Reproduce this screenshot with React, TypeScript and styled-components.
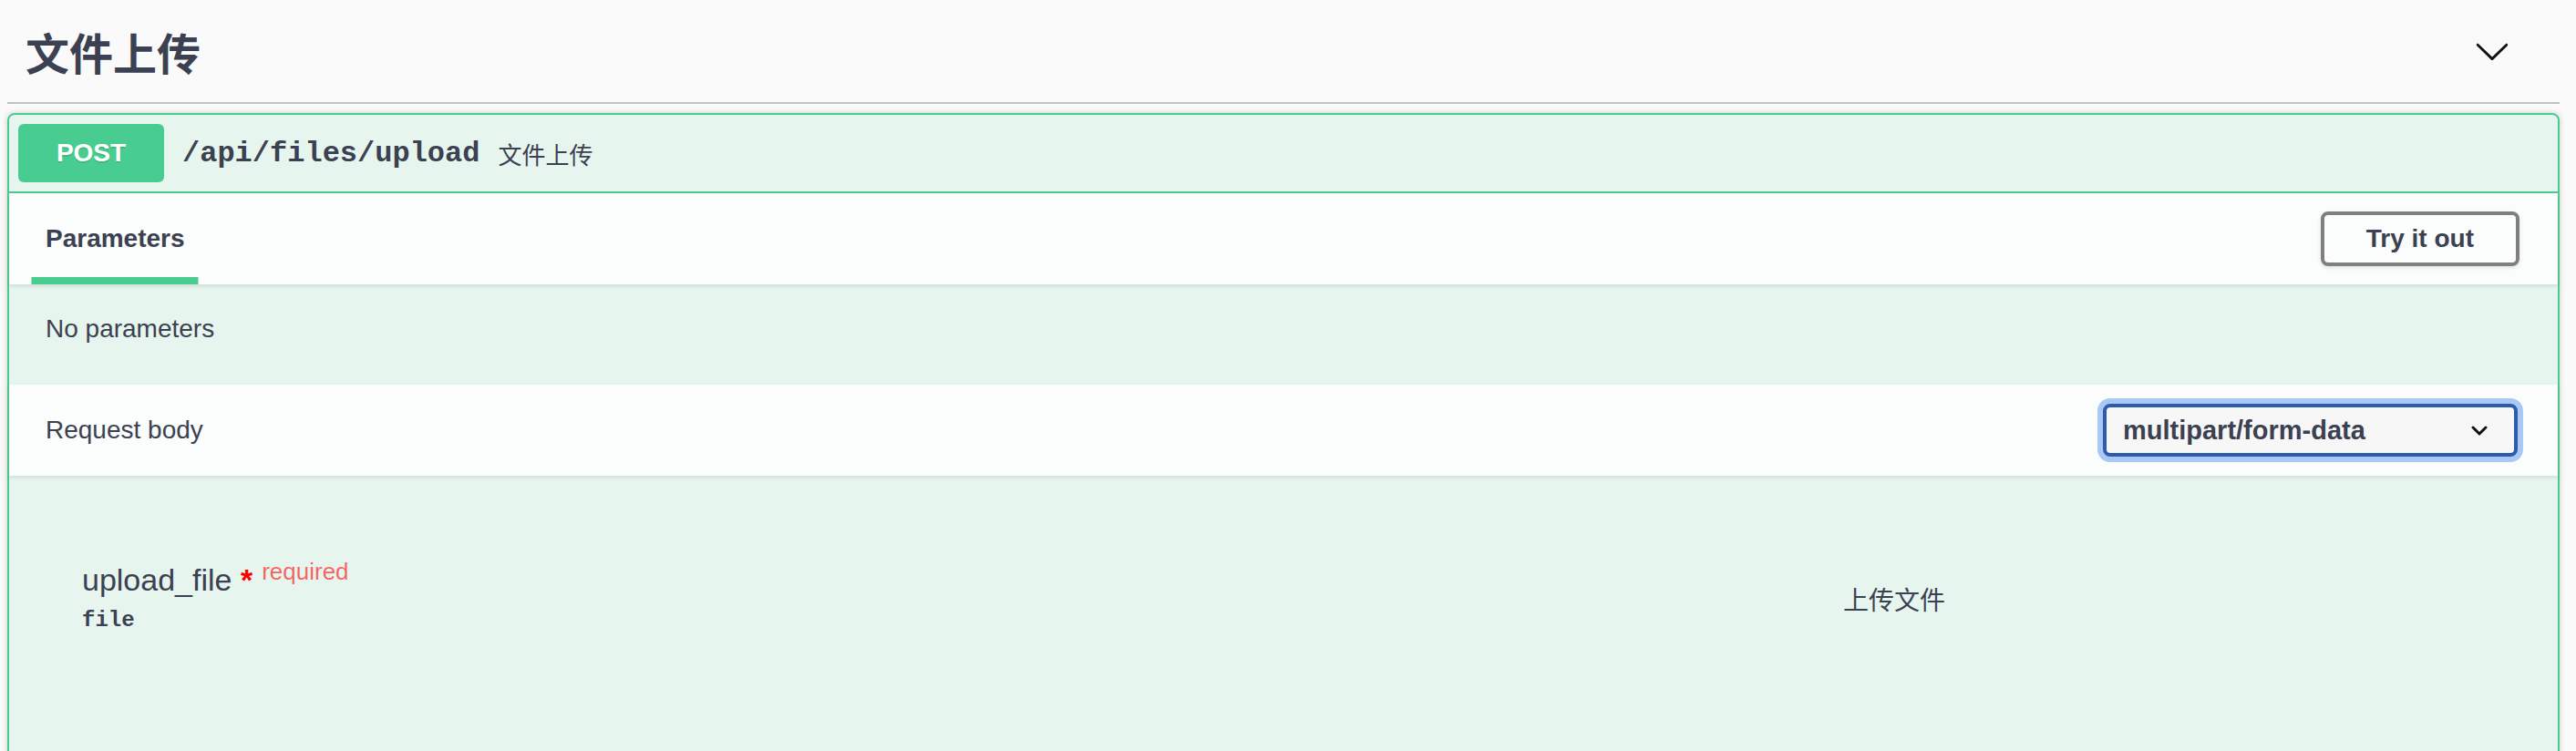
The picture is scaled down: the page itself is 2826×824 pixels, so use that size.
import styled, { createGlobalStyle } from "styled-components";

const GlobalStyle = createGlobalStyle`
  html, body {
    margin: 0;
    padding: 0;
    background: #fafafa;
    overflow: hidden;
  }
  body {
    font-family: "Liberation Sans", "Noto Sans CJK SC", sans-serif;
    color: #3b4151;
  }
`;

const Page = styled.div`
  height: 824px;
  padding: 0 18px 0 8px;
  box-sizing: border-box;
  overflow: hidden;
`;

const TagHeader = styled.div`
  display: flex;
  align-items: center;
  justify-content: space-between;
  padding: 20px 54px 20px 20px;
  margin-bottom: 10px;
  border-bottom: 2px solid rgba(59, 65, 81, 0.3);
`;

const TagTitle = styled.h3`
  margin: 0;
  font-family: "Noto Sans CJK SC", sans-serif;
  font-size: 48px;
  line-height: 72px;
  font-weight: 700;
  color: #3b4151;
`;

const ExpandButton = styled.button`
  display: flex;
  padding: 0;
  border: none;
  background: none;
  cursor: pointer;
`;

const Opblock = styled.div`
  border: 2px solid #49cc90;
  border-radius: 8px;
  background: rgba(73, 204, 144, 0.1);
  box-shadow: 0 0 6px rgba(0, 0, 0, 0.19);
`;

const Summary = styled.div`
  display: flex;
  align-items: center;
  padding: 10px;
  border-bottom: 2px solid #49cc90;
`;

const MethodBadge = styled.span`
  min-width: 160px;
  padding: 12px 0;
  line-height: 40px;
  font-size: 28px;
  font-weight: 700;
  text-align: center;
  color: #fff;
  background: #49cc90;
  border-radius: 6px;
  text-shadow: 0 2px 0 rgba(0, 0, 0, 0.1);
`;

const PathText = styled.span`
  padding: 0 20px;
  font-family: "Liberation Mono", monospace;
  font-size: 32px;
  font-weight: 700;
  color: #3b4151;
`;

const SummaryDesc = styled.span`
  font-size: 26px;
  color: #3b4151;
`;

const SectionHeader = styled.div`
  position: relative;
  display: flex;
  align-items: center;
  justify-content: space-between;
  min-height: 100px;
  padding: 0 40px;
  box-sizing: border-box;
  background: rgba(255, 255, 255, 0.8);
  box-shadow: 0 2px 4px rgba(0, 0, 0, 0.1);
`;

const TabsHeader = styled(SectionHeader)`
  align-items: stretch;
  height: 100px;
`;

const Tab = styled.div`
  position: relative;
  display: flex;
  align-items: center;

  &::after {
    content: "";
    position: absolute;
    left: 50%;
    bottom: 0;
    width: 120%;
    height: 8px;
    background: #49cc90;
    transform: translateX(-50%);
  }
`;

const SectionTitle = styled.h4<{ $bold?: boolean }>`
  margin: 0;
  font-size: 28px;
  line-height: 32px;
  font-weight: ${({ $bold }) => ($bold ? 700 : 400)};
  color: #3b4151;
`;

const TryButton = styled.button`
  align-self: center;
  padding: 10px 46px;
  font-family: "Liberation Sans", sans-serif;
  font-size: 28px;
  line-height: 32px;
  font-weight: 700;
  color: #3b4151;
  background: transparent;
  border: 4px solid #7f7f7f;
  border-radius: 8px;
  box-shadow: 0 2px 4px rgba(0, 0, 0, 0.1);
  margin-right: 2px;
`;

const EmptyNote = styled.div`
  padding: 33px 40px 45px;
  font-size: 28px;
  line-height: 32px;
`;

const SelectBox = styled.div`
  display: flex;
  align-items: center;
  justify-content: space-between;
  width: 455px;
  height: 58px;
  margin-right: 4px;
  padding: 0 29px 0 18px;
  box-sizing: border-box;
  font-size: 29px;
  font-weight: 700;
  color: #3b4151;
  background: #f7f7f8;
  border: 4px solid #2c5cab;
  border-radius: 8px;
  box-shadow: 0 0 0 6px rgba(104, 156, 238, 0.55);
`;

const ParamSection = styled.div`
  padding: 92px 40px 200px 80px;
`;

const ParamRow = styled.div`
  display: grid;
  grid-template-columns: 1932px 1fr;
`;

const NameLine = styled.div`
  font-size: 34px;
  line-height: 38px;
  color: #3b4151;
  white-space: nowrap;
`;

const Star = styled.span`
  color: #f00;
  font-weight: 700;
`;

const RequiredTag = styled.span`
  padding: 0 10px;
  font-size: 26px;
  line-height: 26px;
  vertical-align: 12px;
  color: rgba(255, 0, 0, 0.6);
`;

const TypeLine = styled.div`
  padding-top: 12px;
  font-family: "Liberation Mono", monospace;
  font-size: 24px;
  line-height: 27px;
  font-weight: 700;
  color: #3b4151;
`;

const ParamDesc = styled.div`
  align-self: center;
  padding-top: 6px;
  font-family: "Noto Sans CJK SC", sans-serif;
  font-size: 28px;
  color: #3b4151;
`;

const Chevron = () => (
  <svg width="40" height="40" viewBox="0 0 20 20" fill="#111">
    <path d="M17.418 6.109c.272-.268.709-.268.979 0s.271.701 0 .969l-7.908 7.83c-.27.268-.707.268-.979 0l-7.908-7.83c-.27-.268-.27-.701 0-.969.271-.268.709-.268.979 0L10 13.25l7.418-7.141z" />
  </svg>
);

const SmallChevron = () => (
  <svg width="18" height="11" viewBox="0 0 18 11">
    <polyline
      points="2,2 9,9 16,2"
      fill="none"
      stroke="#111"
      strokeWidth="3"
      strokeLinecap="round"
      strokeLinejoin="round"
    />
  </svg>
);

const App = () => {
  return (
    <>
      <GlobalStyle />
      <Page>
        <TagHeader>
          <TagTitle>文件上传</TagTitle>
          <ExpandButton aria-label="collapse">
            <Chevron />
          </ExpandButton>
        </TagHeader>

        <Opblock>
          <Summary>
            <MethodBadge>POST</MethodBadge>
            <PathText>/api/files/upload</PathText>
            <SummaryDesc>文件上传</SummaryDesc>
          </Summary>

          <TabsHeader>
            <Tab>
              <SectionTitle $bold>Parameters</SectionTitle>
            </Tab>
            <TryButton>Try it out</TryButton>
          </TabsHeader>

          <EmptyNote>No parameters</EmptyNote>

          <SectionHeader>
            <SectionTitle>Request body</SectionTitle>
            <SelectBox>
              <span>multipart/form-data</span>
              <SmallChevron />
            </SelectBox>
          </SectionHeader>

          <ParamSection>
            <ParamRow>
              <div>
                <NameLine>
                  upload_file
                  <Star>&nbsp;*</Star>
                  <RequiredTag>required</RequiredTag>
                </NameLine>
                <TypeLine>file</TypeLine>
              </div>
              <ParamDesc>上传文件</ParamDesc>
            </ParamRow>
          </ParamSection>
        </Opblock>
      </Page>
    </>
  );
};

export default App;
